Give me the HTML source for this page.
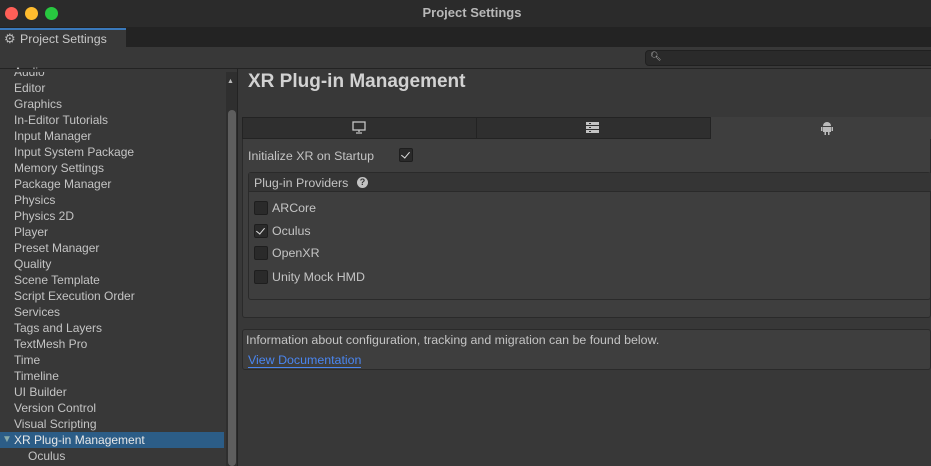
<!DOCTYPE html>
<html><head><style>
*{margin:0;padding:0;box-sizing:border-box}
body{width:931px;height:466px;background:#383838;font-family:"Liberation Sans",sans-serif;font-size:12px;color:#c4c4c4;position:relative;overflow:hidden}
.a{position:absolute}
.li{position:absolute;left:14px;font-size:12px;color:#c4c4c4;line-height:16px}
.r{font-size:12.4px}
.cb{position:absolute;width:14px;height:14px;background:#2a2a2a;border:1px solid #1e1e1e;border-radius:2px}
.ck::after{content:"";position:absolute;left:3px;top:1px;width:4px;height:7px;border:solid #e0e0e0;border-width:0 1.5px 1.5px 0;transform:rotate(40deg)}
</style></head><body>
<div class="a" style="left:0;top:0;width:931px;height:27px;background:#2b2b2b"></div>
<div class="a" style="left:5px;top:7px;width:13px;height:13px;border-radius:50%;background:#fe5f57"></div>
<div class="a" style="left:25px;top:7px;width:13px;height:13px;border-radius:50%;background:#febc2e"></div>
<div class="a" style="left:45px;top:7px;width:13px;height:13px;border-radius:50%;background:#28c840"></div>
<div class="a" style="left:0;top:5px;width:944px;text-align:center;font-weight:bold;font-size:13px;color:#b8b8b8">Project Settings</div>
<div class="a" style="left:0;top:27px;width:931px;height:20px;background:#232323"></div>
<div class="a" style="left:0;top:28px;width:126px;height:20px;background:#383838;border-top:2px solid #3a79bb"></div>
<div class="a" style="left:4px;top:31px;font-size:13px;color:#bbb">⚙</div>
<div class="a" style="left:20px;top:32px;font-size:12.4px;color:#c8c8c8">Project Settings</div>
<div class="a" style="left:645px;top:50px;width:290px;height:16px;background:#2a2a2a;border:1px solid #202020;border-radius:4px"></div>
<div class="a" style="left:650px;top:51px;font-size:9px;color:#bbb">🔍︎</div>
<div class="a" style="left:0;top:68px;width:931px;height:1px;background:#232323"></div>
<div class="a" style="left:237px;top:69px;width:1px;height:397px;background:#232323"></div>
<div class="a" style="left:226px;top:72px;width:11px;height:394px;background:#2f2f2f"></div>
<div class="a" style="left:228px;top:110px;width:8px;height:356px;background:#5e5e5e;border-radius:4px"></div>
<div class="a" style="left:227px;top:78px;font-size:7px;color:#bbb">▲</div>
<div class="li" style="top:64px">Audio</div>
<div class="a" style="left:0;top:69px;width:226px;height:3px;background:#383838"></div>
<div class="li" style="top:80px">Editor</div>
<div class="li" style="top:96px">Graphics</div>
<div class="li" style="top:112px">In-Editor Tutorials</div>
<div class="li" style="top:128px">Input Manager</div>
<div class="li" style="top:144px">Input System Package</div>
<div class="li" style="top:160px">Memory Settings</div>
<div class="li" style="top:176px">Package Manager</div>
<div class="li" style="top:192px">Physics</div>
<div class="li" style="top:208px">Physics 2D</div>
<div class="li" style="top:224px">Player</div>
<div class="li" style="top:240px">Preset Manager</div>
<div class="li" style="top:256px">Quality</div>
<div class="li" style="top:272px">Scene Template</div>
<div class="li" style="top:288px">Script Execution Order</div>
<div class="li" style="top:304px">Services</div>
<div class="li" style="top:320px">Tags and Layers</div>
<div class="li" style="top:336px">TextMesh Pro</div>
<div class="li" style="top:352px">Time</div>
<div class="li" style="top:368px">Timeline</div>
<div class="li" style="top:384px">UI Builder</div>
<div class="li" style="top:400px">Version Control</div>
<div class="li" style="top:416px">Visual Scripting</div>
<div class="a" style="left:0;top:432px;width:224px;height:16px;background:#2c5d87"></div>
<div class="a" style="left:2px;top:434px;font-size:10px;color:#8aa">▼</div>
<div class="li" style="top:432px;color:#e8e8e8">XR Plug-in Management</div>
<div class="li" style="top:448px;left:28px">Oculus</div>

<div class="a" style="left:248px;top:71px;font-size:19px;font-weight:bold;color:#d2d2d2">XR Plug-in Management</div>
<div class="a" style="left:242px;top:117px;width:689px;height:22px;background:#2f2f2f;border:1px solid #232323"></div>
<div class="a" style="left:476px;top:117px;width:1px;height:22px;background:#232323"></div>
<div class="a" style="left:710px;top:117px;width:221px;height:22px;background:#3e3e3e;border-left:1px solid #232323"></div>
<svg class="a" style="left:352px;top:121px" width="14" height="13"><rect x="1" y="1" width="12" height="8" fill="none" stroke="#c4c4c4" stroke-width="1.3"/><path d="M7 9v2M4 12h6" stroke="#c4c4c4" stroke-width="1.3"/></svg>
<svg class="a" style="left:586px;top:122px" width="13" height="11"><rect x="0" y="0" width="13" height="3" fill="#c4c4c4"/><rect x="0" y="4" width="13" height="3" fill="#c4c4c4"/><rect x="0" y="8" width="13" height="3" fill="#c4c4c4"/><path d="M3 1.5h2M3 5.5h2M3 9.5h2" stroke="#2f2f2f"/></svg>
<svg class="a" style="left:821px;top:121px" width="12" height="14"><path d="M2 5a4 4 0 0 1 8 0z" fill="#bbb"/><rect x="2" y="6" width="8" height="5" fill="#bbb"/><rect x="0" y="6" width="1.5" height="4" fill="#bbb"/><rect x="10.5" y="6" width="1.5" height="4" fill="#bbb"/><rect x="3.5" y="11" width="1.5" height="3" fill="#bbb"/><rect x="7" y="11" width="1.5" height="3" fill="#bbb"/></svg>
<div class="a" style="left:242px;top:139px;width:689px;height:179px;background:#3e3e3e;border:1px solid #2a2a2a;border-top:none;border-radius:0 0 3px 3px"></div>
<div class="a r" style="left:248px;top:149px;color:#c4c4c4">Initialize XR on Startup</div>
<div class="cb ck" style="left:399px;top:148px"></div>
<div class="a" style="left:248px;top:172px;width:683px;height:128px;border:1px solid #2a2a2a;border-radius:3px"></div>
<div class="a" style="left:249px;top:173px;width:682px;height:19px;background:#353535;border-bottom:1px solid #2a2a2a"></div>
<div class="a r" style="left:254px;top:176px">Plug-in Providers</div>
<div class="a" style="left:357px;top:177px;width:11px;height:11px;border-radius:50%;background:#c4c4c4;color:#353535;font-size:9px;font-weight:bold;text-align:center;line-height:11px">?</div>
<div class="cb" style="left:254px;top:201px"></div><div class="a r" style="left:272px;top:201px">ARCore</div>
<div class="cb ck" style="left:254px;top:224px"></div><div class="a r" style="left:272px;top:224px">Oculus</div>
<div class="cb" style="left:254px;top:246px"></div><div class="a r" style="left:272px;top:246px">OpenXR</div>
<div class="cb" style="left:254px;top:270px"></div><div class="a r" style="left:272px;top:270px">Unity Mock HMD</div>
<div class="a" style="left:242px;top:329px;width:689px;height:41px;background:#3e3e3e;border:1px solid #2a2a2a;border-radius:3px"></div>
<div class="a r" style="left:246px;top:333px">Information about configuration, tracking and migration can be found below.</div>
<div class="a r" style="left:248px;top:353px;color:#4a86f0;border-bottom:1px solid #4a86f0;line-height:14px">View Documentation</div>
</body></html>
